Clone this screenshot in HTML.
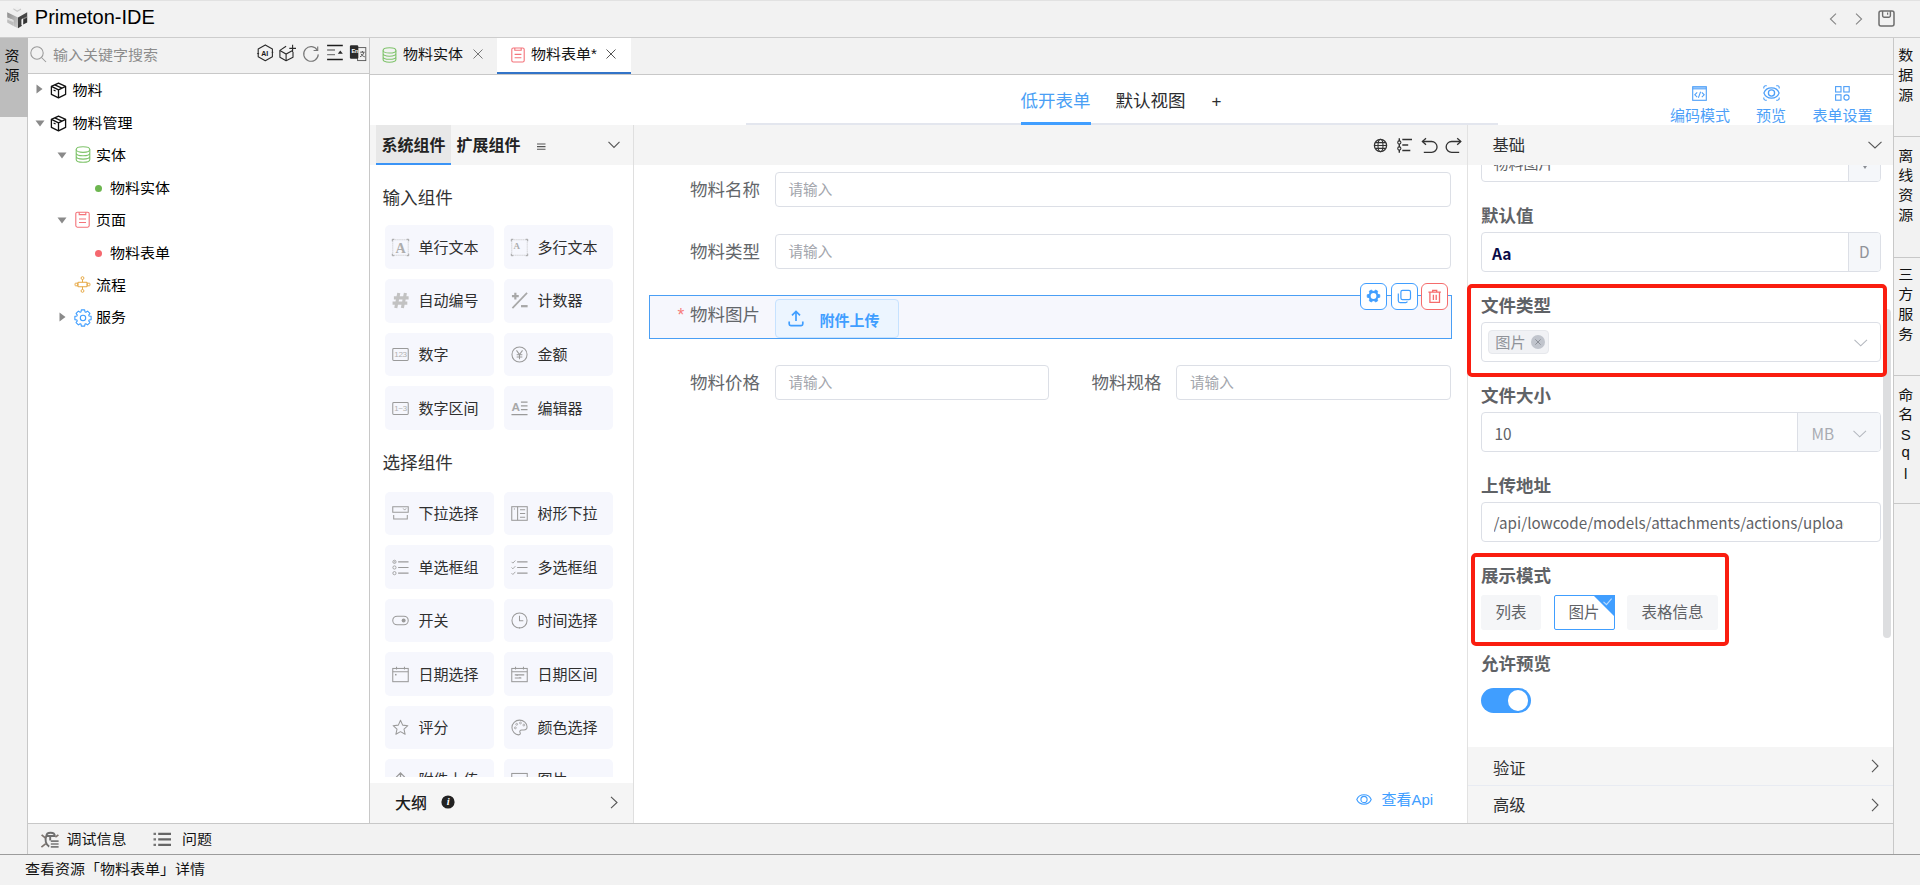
<!DOCTYPE html>
<html lang="zh-CN">
<head>
<meta charset="utf-8">
<title>Primeton-IDE</title>
<style>
*{box-sizing:border-box;margin:0;padding:0}
html,body{width:1920px;height:885px;overflow:hidden;background:#f2f2f2;color:#000;
  font-family:"Liberation Sans","Noto Sans CJK SC",sans-serif;font-size:15px;}
body{position:relative}
.a{position:absolute}
.t{position:absolute;white-space:nowrap;line-height:1}
svg{position:absolute;overflow:visible}
.card{position:absolute;width:109px;height:43.5px;background:#f6f7fd;border-radius:5px}
.inp{position:absolute;background:#fff;border:1px solid #dcdfe6;border-radius:4px}
</style>
</head>
<body>
<div class="a" style="left:0px;top:0px;width:1920px;height:38px;background:#f2f2f2;border-top:1px solid #e2e2e2;border-bottom:1px solid #cdcdcd"></div>
<svg style="left:0px;top:0px;" width="34" height="34" viewBox="0 0 34 34" fill="none">
<defs><linearGradient id="lgL" x1="0" y1="0" x2="1" y2="1"><stop offset="0" stop-color="#8c8c8c"/><stop offset="1" stop-color="#cfcfcf"/></linearGradient>
<linearGradient id="lgR" x1="0" y1="0" x2="0" y2="1"><stop offset="0" stop-color="#4a4a4a"/><stop offset="1" stop-color="#3a3a3a"/></linearGradient></defs>
<path d="M17.2 6.4 L27.2 12.2 L18 17.6 L7.2 12.2 Z" fill="#efefef"/>
<path d="M13.4 8.2 L17.2 10.6 L21 8.4 L21 9.8 L17.2 12 L13.4 9.6 Z" fill="#c9c9c9"/>
<path d="M7.2 12.2 L18 17.6 L18 28.2 L13.4 26 L13.4 20 L7.2 17.4 Z" fill="url(#lgL)"/>
<path d="M18 17.6 L27.2 12.2 L27.2 16.4 L22 19 L22 25.8 L18 28.2 Z" fill="url(#lgR)"/>
<path d="M7.2 18 L13.4 20.6 L13.4 22 L7.2 19.6 Z" fill="#dcdcdc"/>
<path d="M7.2 19.6 L13.4 22 L13.4 26 L7.2 22.6 Z" fill="#bdbdbd"/>
<path d="M21.4 19.4 L23.2 18.4 L23.2 24.6 L21.4 25.6 Z" fill="#f4f4f4"/>
<path d="M23.2 18.4 L27.2 16.4 L27.2 22.6 L23.2 24.6 Z" fill="#333"/>
<path d="M22.6 18.8 L27.2 16.4 L27.2 17.6 L23.6 19.5 Z" fill="#8a8a8a"/>
</svg>
<div class="t" style="left:34.8px;top:7px;font-size:20px;color:#000;">Primeton-IDE</div>
<svg style="left:1828px;top:11.5px;" width="10" height="14" viewBox="0 0 10 14" fill="none"><path d="M8 1.6 L2.4 7 L8 12.4" stroke="#858585" stroke-width="1.05"/></svg>
<svg style="left:1854px;top:11.5px;" width="10" height="14" viewBox="0 0 10 14" fill="none"><path d="M2 1.6 L7.6 7 L2 12.4" stroke="#858585" stroke-width="1.05"/></svg>
<svg style="left:1878px;top:10px;" width="17" height="17" viewBox="0 0 17 17" fill="none"><rect x="1" y="1" width="15" height="15" rx="2" stroke="#6e6e6e" stroke-width="1.5"/><path d="M4.6 1 V5.6 A1.6 1.6 0 0 0 6.2 7.2 H10.8 A1.6 1.6 0 0 0 12.4 5.6 V1" stroke="#6e6e6e" stroke-width="1.4"/><path d="M9.6 2.6 V4.8" stroke="#6e6e6e" stroke-width="1.2"/></svg>
<div class="a" style="left:0px;top:38px;width:28px;height:818px;background:#f2f2f2;border-right:1px solid #c8c8c8"></div>
<div class="a" style="left:0px;top:38px;width:28px;height:79px;background:#bdbdbd"></div>
<div class="t" style="left:4.5px;top:46px;font-size:15px;line-height:20px;white-space:normal;width:16px;color:#0a0a0a;transform:scaleY(.92)">资源</div>
<div class="a" style="left:28px;top:38px;width:341px;height:36px;background:#f2f2f2;border-bottom:1px solid #c8c8c8"></div>
<svg style="left:29.8px;top:46.2px;" width="17" height="17" viewBox="0 0 17 17" fill="none"><circle cx="7" cy="7" r="6.2" stroke="#999" stroke-width="1.05"/><path d="M11.5 11.5 L16 16" stroke="#999" stroke-width="1.05"/></svg>
<div class="t" style="left:53px;top:48px;font-size:15px;color:#8c8c8c;transform:scaleY(.9);transform-origin:50% 50%;">输入关键字搜索</div>
<svg style="left:250px;top:38px;" width="125" height="36" viewBox="250 38 125 36" fill="none">
<path d="M265.3 44.9 L272.4 48.9 V56.8 L265.3 60.8 L258.2 56.8 V48.9 Z" stroke="#2a2a2a" stroke-width="1.1" stroke-linejoin="round"/>
<path d="M256.8 53 L258.2 54.6 L259.4 53 Z M271.4 52.6 L272.5 51 L273.6 52.6 Z" fill="#2a2a2a"/>
<path d="M286.1 46.2 L279.9 50.4 V57.2 L286.1 60.8 L293 57.2 V52" stroke="#2a2a2a" stroke-width="1.1" stroke-linejoin="round"/>
<path d="M279.9 50.4 L286.1 54 L292.6 50.6 M286.1 54 V60.8" stroke="#2a2a2a" stroke-width="1.1"/>
<path d="M292.6 44.8 V52 M289.3 48.4 H296" stroke="#2a2a2a" stroke-width="1.1"/>
<path d="M318.3 54.4 A7.3 7.3 0 1 1 317.4 50.4" stroke="#777" stroke-width="1.15"/>
<path d="M317.7 46.4 V50.5 H313.6" stroke="#777" stroke-width="1.15"/>
<path d="M327.1 45.5 H342.8 M327.1 59.5 H342.8" stroke="#1e1e1e" stroke-width="1.5"/>
<path d="M327.1 50 H335 M327.1 54.6 H335" stroke="#7d7d7d" stroke-width="1.4"/>
<path d="M337.8 53.8 L340.3 50.6 L342.8 53.8 Z" fill="#2a2a2a"/>
<rect x="357.6" y="47.6" width="8.2" height="13" stroke="#555" stroke-width="0.9" fill="#f2f2f2"/>
<path d="M360.2 52.2 H364.6 M362.4 51 V52.2 M363.8 52.4 C363.4 54.6 361.6 56.2 360 56.8 M361 53.8 C361.8 55.4 363.2 56.4 364.8 56.8" stroke="#333" stroke-width="0.8"/>
<rect x="349.9" y="45.2" width="8.4" height="13.6" rx="1.2" fill="#2b2b2b"/>
</svg>
<div class="t" style="left:261.3px;top:50px;font-size:7px;color:#1a1a1a;font-weight:bold;">AI</div>
<div class="t" style="left:351.4px;top:49px;font-size:5.6px;color:#fff;font-weight:bold;">En</div>
<div class="a" style="left:28px;top:74px;width:341px;height:749px;background:#fff"></div>
<div class="a" style="left:369px;top:38px;width:1px;height:785px;background:#c8c8c8"></div>
<svg style="left:35.8px;top:84.4px;" width="7" height="10" viewBox="0 0 7 10" fill="none"><path d="M0.5 0.5 L6.5 5 L0.5 9.5 Z" fill="#8a8a8a"/></svg><svg style="left:50.1px;top:81.7px;" width="17" height="17" viewBox="0 0 17 17" fill="none"><path d="M8.5 1.2 L15.6 4.4 V12.4 L8.5 15.8 L1.4 12.4 V4.4 Z" stroke="#111" stroke-width="1.3" stroke-linejoin="round"/><path d="M1.4 4.4 L8.5 7.8 L15.6 4.4 M8.5 7.8 V15.8 M4.8 2.9 L12 6.2" stroke="#111" stroke-width="1.3" stroke-linejoin="round"/><path d="M3.6 8 L5.6 9" stroke="#111" stroke-width="1.2"/></svg><div class="t" style="left:72.5px;top:83px;font-size:15px;color:#000;transform:scaleY(.9);transform-origin:50% 50%;">物料</div>
<svg style="left:35px;top:120px;" width="10" height="7" viewBox="0 0 10 7" fill="none"><path d="M0.5 0.5 L9.5 0.5 L5 6.5 Z" fill="#8a8a8a"/></svg><svg style="left:50.1px;top:114.5px;" width="17" height="17" viewBox="0 0 17 17" fill="none"><path d="M8.5 1.2 L15.6 4.4 V12.4 L8.5 15.8 L1.4 12.4 V4.4 Z" stroke="#111" stroke-width="1.3" stroke-linejoin="round"/><path d="M1.4 4.4 L8.5 7.8 L15.6 4.4 M8.5 7.8 V15.8 M4.8 2.9 L12 6.2" stroke="#111" stroke-width="1.3" stroke-linejoin="round"/><path d="M3.6 8 L5.6 9" stroke="#111" stroke-width="1.2"/></svg><div class="t" style="left:72.5px;top:116px;font-size:15px;color:#000;transform:scaleY(.9);transform-origin:50% 50%;">物料管理</div>
<svg style="left:57px;top:152.3px;" width="10" height="7" viewBox="0 0 10 7" fill="none"><path d="M0.5 0.5 L9.5 0.5 L5 6.5 Z" fill="#8a8a8a"/></svg><svg style="left:74.7px;top:146.0px;" width="16" height="17" viewBox="0 0 16 17" fill="none"><ellipse cx="8" cy="3.6" rx="6.8" ry="2.8" stroke="#7fc36b" stroke-width="1.1"/><path d="M1.2 3.6 V13.4 C1.2 15 4.2 16.2 8 16.2 C11.8 16.2 14.8 15 14.8 13.4 V3.6 M1.2 7 C1.2 8.6 4.2 9.8 8 9.8 C11.8 9.8 14.8 8.6 14.8 7 M1.2 10.3 C1.2 11.9 4.2 13.1 8 13.1 C11.8 13.1 14.8 11.9 14.8 10.3" stroke="#7fc36b" stroke-width="1.1"/></svg><div class="t" style="left:96px;top:148px;font-size:15px;color:#000;transform:scaleY(.9);transform-origin:50% 50%;">实体</div>
<div class="a" style="left:94.8px;top:184.5px;width:7.6px;height:7.6px;background:#6db650;border-radius:50%"></div><div class="t" style="left:110px;top:181px;font-size:15px;color:#000;transform:scaleY(.9);transform-origin:50% 50%;">物料实体</div>
<svg style="left:57px;top:217.3px;" width="10" height="7" viewBox="0 0 10 7" fill="none"><path d="M0.5 0.5 L9.5 0.5 L5 6.5 Z" fill="#8a8a8a"/></svg><svg style="left:74.6px;top:210.8px;" width="15" height="17" viewBox="0 0 15 17" fill="none"><rect x="0.8" y="1.2" width="13.4" height="15" rx="1.6" stroke="#f4737a" stroke-width="1.1"/><path d="M4.2 1.2 V3.6 H10.8 V1.2 M4 8 H11 M4 11.5 H11" stroke="#f4737a" stroke-width="1.1"/></svg><div class="t" style="left:96px;top:213px;font-size:15px;color:#000;transform:scaleY(.9);transform-origin:50% 50%;">页面</div>
<div class="a" style="left:94.8px;top:249.5px;width:7.6px;height:7.6px;background:#f5686f;border-radius:50%"></div><div class="t" style="left:110px;top:246px;font-size:15px;color:#000;transform:scaleY(.9);transform-origin:50% 50%;">物料表单</div>
<svg style="left:74.2px;top:276.4px;" width="17" height="17" viewBox="0 0 17 18" fill="none"><circle cx="8.5" cy="2.2" r="1.5" stroke="#e6a640" stroke-width="1"/><circle cx="8.5" cy="15.8" r="1.5" stroke="#e6a640" stroke-width="1"/><rect x="3.6" y="6.6" width="9.8" height="4.8" rx="0.8" stroke="#e6a640" stroke-width="1.1"/><rect x="0.6" y="7.6" width="3" height="2.8" rx="0.7" stroke="#e6a640" stroke-width="1"/><rect x="13.4" y="7.6" width="3" height="2.8" rx="0.7" stroke="#e6a640" stroke-width="1"/><path d="M8.5 3.7 V6.6 M8.5 11.4 V14.3" stroke="#e6a640" stroke-width="1"/></svg><div class="t" style="left:96px;top:278px;font-size:15px;color:#000;transform:scaleY(.9);transform-origin:50% 50%;">流程</div>
<svg style="left:58.9px;top:312.2px;" width="7" height="10" viewBox="0 0 7 10" fill="none"><path d="M0.5 0.5 L6.5 5 L0.5 9.5 Z" fill="#8a8a8a"/></svg><svg style="left:74px;top:309px;" width="18" height="18" viewBox="0 0 18 18" fill="none"><path d="M17.13 7.35 L17.13 10.65 L15.08 11.01 L14.72 11.87 L15.92 13.59 L13.59 15.92 L11.87 14.72 L11.01 15.08 L10.65 17.13 L7.35 17.13 L6.99 15.08 L6.13 14.72 L4.41 15.92 L2.08 13.59 L3.28 11.87 L2.92 11.01 L0.87 10.65 L0.87 7.35 L2.92 6.99 L3.28 6.13 L2.08 4.41 L4.41 2.08 L6.13 3.28 L6.99 2.92 L7.35 0.87 L10.65 0.87 L11.01 2.92 L11.87 3.28 L13.59 2.08 L15.92 4.41 L14.72 6.13 L15.08 6.99 Z" stroke="#409eff" stroke-width="1.1" stroke-linejoin="round"/><circle cx="9" cy="9" r="2.7" stroke="#409eff" stroke-width="1.1"/></svg><div class="t" style="left:96px;top:310px;font-size:15px;color:#000;transform:scaleY(.9);transform-origin:50% 50%;">服务</div>
<div class="a" style="left:1893px;top:38px;width:27px;height:818px;background:#f2f2f2;border-left:1px solid #c8c8c8"></div>
<div class="t" style="left:1805.7px;width:200px;text-align:center;top:48px;font-size:15px;color:#111;transform:scaleY(.9);transform-origin:50% 50%;">数</div><div class="t" style="left:1805.7px;width:200px;text-align:center;top:68px;font-size:15px;color:#111;transform:scaleY(.9);transform-origin:50% 50%;">据</div><div class="t" style="left:1805.7px;width:200px;text-align:center;top:88px;font-size:15px;color:#111;transform:scaleY(.9);transform-origin:50% 50%;">源</div>
<div class="a" style="left:1894px;top:136px;width:26px;height:1px;background:#c8c8c8"></div>
<div class="t" style="left:1805.7px;width:200px;text-align:center;top:149px;font-size:15px;color:#111;transform:scaleY(.9);transform-origin:50% 50%;">离</div><div class="t" style="left:1805.7px;width:200px;text-align:center;top:168px;font-size:15px;color:#111;transform:scaleY(.9);transform-origin:50% 50%;">线</div><div class="t" style="left:1805.7px;width:200px;text-align:center;top:188px;font-size:15px;color:#111;transform:scaleY(.9);transform-origin:50% 50%;">资</div><div class="t" style="left:1805.7px;width:200px;text-align:center;top:208px;font-size:15px;color:#111;transform:scaleY(.9);transform-origin:50% 50%;">源</div>
<div class="a" style="left:1894px;top:257px;width:26px;height:1px;background:#c8c8c8"></div>
<div class="t" style="left:1805.7px;width:200px;text-align:center;top:267px;font-size:15px;color:#111;transform:scaleY(.9);transform-origin:50% 50%;">三</div><div class="t" style="left:1805.7px;width:200px;text-align:center;top:287px;font-size:15px;color:#111;transform:scaleY(.9);transform-origin:50% 50%;">方</div><div class="t" style="left:1805.7px;width:200px;text-align:center;top:307px;font-size:15px;color:#111;transform:scaleY(.9);transform-origin:50% 50%;">服</div><div class="t" style="left:1805.7px;width:200px;text-align:center;top:327px;font-size:15px;color:#111;transform:scaleY(.9);transform-origin:50% 50%;">务</div>
<div class="a" style="left:1894px;top:375px;width:26px;height:1px;background:#c8c8c8"></div>
<div class="t" style="left:1805.7px;width:200px;text-align:center;top:388px;font-size:15px;color:#111;transform:scaleY(.9);transform-origin:50% 50%;">命</div><div class="t" style="left:1805.7px;width:200px;text-align:center;top:407px;font-size:15px;color:#111;transform:scaleY(.9);transform-origin:50% 50%;">名</div><div class="t" style="left:1805.7px;width:200px;text-align:center;top:427px;font-size:15px;color:#111;">S</div><div class="t" style="left:1805.7px;width:200px;text-align:center;top:444px;font-size:15px;color:#111;">q</div><div class="t" style="left:1805.7px;width:200px;text-align:center;top:466px;font-size:15px;color:#111;">l</div>
<div class="a" style="left:1894px;top:503px;width:26px;height:1px;background:#c8c8c8"></div>
<div class="a" style="left:28px;top:823px;width:1865px;height:33px;background:#f2f2f2;border-top:1px solid #c8c8c8"></div>
<svg style="left:41px;top:831px;" width="18" height="17" viewBox="0 0 18 17" fill="none"><path d="M5.4 5 C5.4 0.6 13.8 0.6 13.8 5 M4.8 5 H14.4 M9.2 5 V9.4 M5.2 5.2 C3.8 9 4.6 13.6 8.2 15.6" stroke="#6e6e6e" stroke-width="1.9"/><path d="M0.6 3.8 L4.6 7.2 M0.4 16.2 L4.8 12.6 M17.4 3.8 L14.4 6.2" stroke="#7d746e" stroke-width="1.7"/><path d="M9.8 10.2 H17.6 M9.8 13 H17.6 M9.8 15.8 H17.6" stroke="#7a7a7a" stroke-width="1.7"/></svg>
<div class="t" style="left:66.5px;top:832px;font-size:15px;color:#111;transform:scaleY(.9);transform-origin:50% 50%;">调试信息</div>
<svg style="left:153px;top:832px;" width="18" height="15" viewBox="0 0 18 15" fill="none"><path d="M0.5 1.8 H3 M0.5 7.3 H3 M0.5 12.8 H3" stroke="#777" stroke-width="2.2"/><path d="M5.2 1.8 H18 M5.2 7.3 H18 M5.2 12.8 H18" stroke="#666" stroke-width="2.2"/></svg>
<div class="t" style="left:182px;top:832px;font-size:15px;color:#111;transform:scaleY(.9);transform-origin:50% 50%;">问题</div>
<div class="a" style="left:0px;top:854px;width:1920px;height:31px;background:#f2f2f2;border-top:1.5px solid #9c9c9c"></div>
<div class="t" style="left:25px;top:862px;font-size:15px;color:#111;transform:scaleY(.9);transform-origin:50% 50%;">查看资源「物料表单」详情</div>
<div class="a" style="left:370px;top:38px;width:1523px;height:37px;background:#f2f2f2;border-bottom:1px solid #c8c8c8"></div>
<div class="a" style="left:497px;top:38px;width:134px;height:36px;background:#fff;border-bottom:2px solid #3274c8"></div>
<svg style="left:382px;top:46.5px;" width="15" height="16" viewBox="0 0 15 16" fill="none"><ellipse cx="7.5" cy="3.4" rx="6.4" ry="2.6" stroke="#7fc36b" stroke-width="1.1"/><path d="M1.1 3.4 V12.6 C1.1 14.1 4 15.2 7.5 15.2 C11 15.2 13.9 14.1 13.9 12.6 V3.4 M1.1 6.6 C1.1 8.1 4 9.2 7.5 9.2 C11 9.2 13.9 8.1 13.9 6.6 M1.1 9.7 C1.1 11.2 4 12.3 7.5 12.3 C11 12.3 13.9 11.2 13.9 9.7" stroke="#7fc36b" stroke-width="1.1"/></svg>
<div class="t" style="left:403px;top:46px;font-size:15px;color:#111;transform:scaleY(.92);">物料实体</div>
<svg style="left:472.5px;top:49.4px;" width="10" height="10" viewBox="0 0 10 10" fill="none"><path d="M0.5 0.5 L9.5 9.5 M9.5 0.5 L0.5 9.5" stroke="#777" stroke-width="1"/></svg>
<svg style="left:511px;top:46.5px;" width="14" height="16" viewBox="0 0 14 16" fill="none"><rect x="0.8" y="1" width="12.4" height="14" rx="1.5" stroke="#f4737a" stroke-width="1.1"/><path d="M3.8 1 V3.2 H10.2 V1 M3.6 7.4 H10.4 M3.6 10.8 H10.4" stroke="#f4737a" stroke-width="1.1"/></svg>
<div class="t" style="left:531px;top:46px;font-size:15px;color:#111;transform:scaleY(.92);">物料表单*</div>
<svg style="left:606px;top:49.4px;" width="10" height="10" viewBox="0 0 10 10" fill="none"><path d="M0.5 0.5 L9.5 9.5 M9.5 0.5 L0.5 9.5" stroke="#555" stroke-width="1"/></svg>
<div class="a" style="left:370px;top:75px;width:1523px;height:748px;background:#fff"></div>
<div class="t" style="left:1020.5px;top:93px;font-size:17.5px;color:#4a9ff5;">低开表单</div>
<div class="t" style="left:1115.5px;top:93px;font-size:17.5px;color:#2b2d30;">默认视图</div>
<div class="t" style="left:1116.5px;width:200px;text-align:center;top:93px;font-size:17px;color:#2b2d30;">+</div>
<div class="a" style="left:746px;top:123px;width:752px;height:2px;background:#e3e6ee"></div>
<div class="a" style="left:1020.5px;top:122.4px;width:70px;height:2.6px;background:#409eff"></div>
<svg style="left:1692px;top:86px;" width="15" height="15" viewBox="0 0 15 15" fill="none"><rect x="0.7" y="0.7" width="13.6" height="13.6" stroke="#4d9ff8" stroke-width="1.1"/><path d="M0.7 2.4 H14.3" stroke="#4d9ff8" stroke-width="2.2" stroke-opacity="0.75"/><path d="M5.2 6.4 L2.8 8.8 L5.2 11.2 M9.8 6.4 L12.2 8.8 L9.8 11.2 M8.6 5.8 L6.4 11.8" stroke="#4d9ff8" stroke-width="1.05"/></svg>
<div class="t" style="left:1670px;top:108px;font-size:15px;color:#4d9ff8;">编码模式</div>
<svg style="left:1762.5px;top:85px;" width="17" height="16" viewBox="0 0 17 16" fill="none"><path d="M0.8 3.6 V2.4 A1.6 1.6 0 0 1 2.4 0.8 H3.8 M13.2 0.8 H14.6 A1.6 1.6 0 0 1 16.2 2.4 V3.6 M16.2 12.4 V13.6 A1.6 1.6 0 0 1 14.6 15.2 H13.2 M3.8 15.2 H2.4 A1.6 1.6 0 0 1 0.8 13.6 V12.4" stroke="#4d9ff8" stroke-width="1.1"/><path d="M0.9 8 C3.4 1.2 13.6 1.2 16.1 8 C13.6 14.8 3.4 14.8 0.9 8 Z" stroke="#4d9ff8" stroke-width="1.2"/><circle cx="8.5" cy="8" r="3.1" stroke="#4d9ff8" stroke-width="1.3"/></svg>
<div class="t" style="left:1756px;top:108px;font-size:15px;color:#4d9ff8;">预览</div>
<svg style="left:1835px;top:86px;" width="15" height="15" viewBox="0 0 15 15" fill="none"><rect x="0.6" y="0.6" width="5.4" height="5.4" stroke="#4d9ff8" stroke-width="1.1"/><rect x="8.8" y="0.6" width="5.4" height="5.4" stroke="#4d9ff8" stroke-width="1.1"/><rect x="0.6" y="8.8" width="5.4" height="5.4" stroke="#4d9ff8" stroke-width="1.1"/><circle cx="11.5" cy="11.5" r="2.6" stroke="#4d9ff8" stroke-width="1.1"/></svg>
<div class="t" style="left:1812.5px;top:108px;font-size:15px;color:#4d9ff8;">表单设置</div>
<div class="a" style="left:370px;top:125px;width:263px;height:40px;background:#f5f5f5"></div>
<div class="a" style="left:376px;top:125px;width:75px;height:40px;background:#e8e8e8;border-bottom:2.5px solid #3a94f6"></div>
<div class="t" style="left:381.5px;top:138px;font-size:16px;color:#222;font-weight:bold;">系统组件</div>
<div class="t" style="left:456.5px;top:138px;font-size:16px;color:#222;font-weight:bold;">扩展组件</div>
<svg style="left:537px;top:143px;" width="9" height="7" viewBox="0 0 9 7" fill="none"><path d="M0 1 H8.5 M0 3.6 H8.5 M0 6.2 H8.5" stroke="#555" stroke-width="1.1"/></svg>
<svg style="left:608px;top:141px;" width="12" height="8" viewBox="0 0 12 8" fill="none"><path d="M0.5 0.8 L6 6.5 L11.5 0.8" stroke="#555" stroke-width="1.1"/></svg>
<div class="a" style="left:633px;top:125px;width:1px;height:698px;background:#dfdfdf"></div>
<div class="a" style="left:370px;top:165px;width:263px;height:611.8px;overflow:hidden">
<div class="t" style="left:12.5px;top:25px;font-size:17.6px;color:#333;">输入组件</div>
<div class="card" style="left:15px;top:60px;height:44px"></div><svg style="left:22px;top:73.5px;" width="17" height="17" viewBox="0 0 18 18" fill="none"><rect x="0.8" y="0.8" width="16.4" height="16.4" stroke="#b0b0b0" stroke-width="0.8" stroke-dasharray="1 1.05"/><path d="M0.3 2.4 V0.3 H2.4 M15.6 0.3 H17.7 V2.4 M17.7 15.6 V17.7 H15.6 M2.4 17.7 H0.3 V15.6" stroke="#a0a0a0" stroke-width="1"/><text x="9" y="14.4" font-size="15" font-weight="bold" font-family="Liberation Serif,serif" fill="#adadad" text-anchor="middle">A</text></svg><div class="t" style="left:48.5px;top:75px;font-size:15px;color:#2f2f2f;">单行文本</div>
<div class="card" style="left:134px;top:60px;height:44px"></div><svg style="left:141px;top:73.5px;" width="17" height="17" viewBox="0 0 18 18" fill="none"><rect x="0.8" y="0.8" width="16.4" height="16.4" stroke="#b0b0b0" stroke-width="0.8" stroke-dasharray="1 1.05"/><path d="M0.3 2.4 V0.3 H2.4 M15.6 0.3 H17.7 V2.4 M17.7 15.6 V17.7 H15.6 M2.4 17.7 H0.3 V15.6" stroke="#a0a0a0" stroke-width="1"/><text x="6.2" y="10.4" font-size="9.5" font-weight="bold" font-family="Liberation Serif,serif" fill="#adadad" text-anchor="middle">A</text></svg><div class="t" style="left:167.5px;top:75px;font-size:15px;color:#2f2f2f;">多行文本</div>
<div class="card" style="left:15px;top:114px;height:43.7px"></div><svg style="left:22px;top:126.5px;" width="17" height="17" viewBox="0 0 18 18" fill="none"><path d="M7.2 1 L4 17 M14.2 1 L11 17 M2 6.2 H17.6 M0.6 11.8 H16.2" stroke="#c2c2c2" stroke-width="3.3"/></svg><div class="t" style="left:48.5px;top:128px;font-size:15px;color:#2f2f2f;">自动编号</div>
<div class="card" style="left:134px;top:114px;height:43.7px"></div><svg style="left:141px;top:126.5px;" width="17" height="17" viewBox="0 0 18 18" fill="none"><path d="M17 1 L1.5 17" stroke="#a8a8a8" stroke-width="1.8"/><path d="M4.6 0.8 V8 M1 4.4 H8.2" stroke="#a8a8a8" stroke-width="2.3"/><path d="M10.6 15 H17.6" stroke="#a8a8a8" stroke-width="2.4"/></svg><div class="t" style="left:167.5px;top:128px;font-size:15px;color:#2f2f2f;">计数器</div>
<div class="card" style="left:15px;top:168px;height:42.5px"></div><svg style="left:22px;top:180.5px;" width="17" height="17" viewBox="0 0 18 18" fill="none"><rect x="0.8" y="2.6" width="16.4" height="12.8" rx="1" stroke="#9a9a9a" stroke-width="1.1"/><text x="9" y="12" font-size="8.6" font-family="Liberation Sans,sans-serif" fill="#b0b0b0" text-anchor="middle" letter-spacing="-0.3">123</text></svg><div class="t" style="left:48.5px;top:182px;font-size:15px;color:#2f2f2f;">数字</div>
<div class="card" style="left:134px;top:168px;height:42.5px"></div><svg style="left:141px;top:180.5px;" width="17" height="17" viewBox="0 0 18 18" fill="none"><circle cx="9" cy="9" r="8" stroke="#9a9a9a" stroke-width="1.1"/><path d="M5.8 4.6 L9 9 L12.2 4.6 M9 9 V14 M6 9.2 H12 M6 11.6 H12" stroke="#9a9a9a" stroke-width="1.1"/></svg><div class="t" style="left:167.5px;top:182px;font-size:15px;color:#2f2f2f;">金额</div>
<div class="card" style="left:15px;top:221px;height:44px"></div><svg style="left:22px;top:234.5px;" width="17" height="17" viewBox="0 0 18 18" fill="none"><rect x="0.8" y="2.6" width="16.4" height="12.8" rx="1" stroke="#9a9a9a" stroke-width="1.1"/><text x="9" y="12" font-size="8.4" font-family="Liberation Sans,sans-serif" fill="#b0b0b0" text-anchor="middle" letter-spacing="-0.3">1~3</text></svg><div class="t" style="left:48.5px;top:236px;font-size:15px;color:#2f2f2f;">数字区间</div>
<div class="card" style="left:134px;top:221px;height:44px"></div><svg style="left:141px;top:234.5px;" width="17" height="17" viewBox="0 0 18 18" fill="none"><text x="5" y="11.4" font-size="12.5" font-weight="bold" font-family="Liberation Sans,sans-serif" fill="#a8a8a8" text-anchor="middle">A</text><path d="M10.5 2.2 H17.5 M10.5 6.2 H17.5 M10.5 10.2 H17.5 M0.5 15.5 H17.5" stroke="#9a9a9a" stroke-width="1.3"/></svg><div class="t" style="left:167.5px;top:236px;font-size:15px;color:#2f2f2f;">编辑器</div>
<div class="t" style="left:12.5px;top:290px;font-size:17.6px;color:#333;">选择组件</div>
<div class="card" style="left:15px;top:327px;height:42.5px"></div><svg style="left:22px;top:339.5px;" width="17" height="17" viewBox="0 0 18 18" fill="none"><path d="M0.8 7.6 V1.8 H17.2 V7.6 Z" stroke="#9a9a9a" stroke-width="1.1"/><path d="M11.8 3.6 L13.4 5.4 L15 3.6" stroke="#9a9a9a" stroke-width="0.9"/><path d="M1.8 10.5 V14.8 H16.2 V10.5" stroke="#9a9a9a" stroke-width="1.1"/></svg><div class="t" style="left:48.5px;top:341px;font-size:15px;color:#2f2f2f;">下拉选择</div>
<div class="card" style="left:134px;top:327px;height:42.5px"></div><svg style="left:141px;top:339.5px;" width="17" height="17" viewBox="0 0 18 18" fill="none"><rect x="0.8" y="1.8" width="16.4" height="14.4" stroke="#9a9a9a" stroke-width="1.1"/><path d="M7 1.8 V16.2 M9.5 5 H15 M9.5 9 H15 M9.5 13 H15 M3 4.2 H4.2" stroke="#9a9a9a" stroke-width="1.1"/></svg><div class="t" style="left:167.5px;top:341px;font-size:15px;color:#2f2f2f;">树形下拉</div>
<div class="card" style="left:15px;top:380px;height:44px"></div><svg style="left:22px;top:393.5px;" width="17" height="17" viewBox="0 0 18 18" fill="none"><circle cx="2.6" cy="3" r="1.7" stroke="#9a9a9a" stroke-width="0.9"/><circle cx="2.6" cy="9" r="1.7" stroke="#9a9a9a" stroke-width="0.9"/><circle cx="2.6" cy="15" r="1.7" stroke="#9a9a9a" stroke-width="0.9"/><circle cx="2.6" cy="3" r="0.6" fill="#9a9a9a"/><path d="M6.5 3 H17.5 M6.5 9 H17.5 M6.5 15 H17.5" stroke="#9a9a9a" stroke-width="1.3"/></svg><div class="t" style="left:48.5px;top:395px;font-size:15px;color:#2f2f2f;">单选框组</div>
<div class="card" style="left:134px;top:380px;height:44px"></div><svg style="left:141px;top:393.5px;" width="17" height="17" viewBox="0 0 18 18" fill="none"><path d="M0.6 3 L2 4.4 L4.6 1.6 M0.6 9 L2 10.4 L4.6 7.6 M0.6 15 L2 16.4 L4.6 13.6" stroke="#9a9a9a" stroke-width="0.9"/><path d="M6.5 3 H17.5 M6.5 9 H17.5 M6.5 15 H17.5" stroke="#9a9a9a" stroke-width="1.3"/></svg><div class="t" style="left:167.5px;top:395px;font-size:15px;color:#2f2f2f;">多选框组</div>
<div class="card" style="left:15px;top:434px;height:42.6px"></div><svg style="left:22px;top:446.5px;" width="17" height="17" viewBox="0 0 18 18" fill="none"><rect x="0.8" y="4.4" width="16.4" height="9.2" rx="4.6" stroke="#9a9a9a" stroke-width="1.1"/><circle cx="12.3" cy="9" r="2.1" fill="#9a9a9a"/></svg><div class="t" style="left:48.5px;top:448px;font-size:15px;color:#2f2f2f;">开关</div>
<div class="card" style="left:134px;top:434px;height:42.6px"></div><svg style="left:141px;top:446.5px;" width="17" height="17" viewBox="0 0 18 18" fill="none"><circle cx="9" cy="9" r="8" stroke="#9a9a9a" stroke-width="1.1"/><path d="M9 4 V9.3 H13" stroke="#9a9a9a" stroke-width="1.1"/><path d="M9 16 V17.4" stroke="#9a9a9a" stroke-width="1"/></svg><div class="t" style="left:167.5px;top:448px;font-size:15px;color:#2f2f2f;">时间选择</div>
<div class="card" style="left:15px;top:487px;height:43.5px"></div><svg style="left:22px;top:500.5px;" width="17" height="17" viewBox="0 0 18 18" fill="none"><rect x="0.8" y="2.6" width="16.4" height="14" stroke="#9a9a9a" stroke-width="1.1"/><path d="M0.8 6 H17.2 M4.8 0.8 V3.6 M13.2 0.8 V3.6" stroke="#9a9a9a" stroke-width="1.1"/><rect x="3.2" y="8.4" width="1.6" height="1.6" fill="#9a9a9a"/></svg><div class="t" style="left:48.5px;top:502px;font-size:15px;color:#2f2f2f;">日期选择</div>
<div class="card" style="left:134px;top:487px;height:43.5px"></div><svg style="left:141px;top:500.5px;" width="17" height="17" viewBox="0 0 18 18" fill="none"><rect x="0.8" y="2.6" width="16.4" height="14" stroke="#9a9a9a" stroke-width="1.1"/><path d="M0.8 6 H17.2 M4.8 0.8 V3.6 M13.2 0.8 V3.6" stroke="#9a9a9a" stroke-width="1.1"/><path d="M4 9.4 H14 M4 12.8 H11" stroke="#9a9a9a" stroke-width="1.1"/><path d="M9.5 12.8 V11.6 M6.5 9.4 V10.6" stroke="#9a9a9a" stroke-width="1"/></svg><div class="t" style="left:167.5px;top:502px;font-size:15px;color:#2f2f2f;">日期区间</div>
<div class="card" style="left:15px;top:541px;height:43px"></div><svg style="left:22px;top:553.5px;" width="17" height="17" viewBox="0 0 18 18" fill="none"><path d="M9 1.4 L11.3 6.5 L16.8 7.1 L12.7 10.8 L13.9 16.2 L9 13.4 L4.1 16.2 L5.3 10.8 L1.2 7.1 L6.7 6.5 Z" stroke="#9a9a9a" stroke-width="1.1" stroke-linejoin="round"/></svg><div class="t" style="left:48.5px;top:555px;font-size:15px;color:#2f2f2f;">评分</div>
<div class="card" style="left:134px;top:541px;height:43px"></div><svg style="left:141px;top:553.5px;" width="17" height="17" viewBox="0 0 18 18" fill="none"><path d="M9 1.2 C4.6 1.2 1 4.7 1 9 C1 13.3 4.4 16.8 8 16.8 C10 16.8 10.2 15.4 9.6 14.4 C8.8 13 9.6 11.6 11.4 11.6 H13.6 C15.6 11.6 17 10.2 17 8.2 C17 4.2 13.4 1.2 9 1.2 Z" stroke="#9a9a9a" stroke-width="1.1"/><circle cx="4.6" cy="9.4" r="1" stroke="#9a9a9a" stroke-width="0.8"/><circle cx="6" cy="5.6" r="1" stroke="#9a9a9a" stroke-width="0.8"/><circle cx="10" cy="4.2" r="1" stroke="#9a9a9a" stroke-width="0.8"/><circle cx="13.6" cy="6.4" r="1" stroke="#9a9a9a" stroke-width="0.8"/></svg><div class="t" style="left:167.5px;top:555px;font-size:15px;color:#2f2f2f;">颜色选择</div>
<div class="card" style="left:15px;top:594px;height:43.5px"></div><svg style="left:22px;top:605.5px;" width="17" height="17" viewBox="0 0 18 18" fill="none"><path d="M9 2 V12 M4.5 6.5 L9 2 L13.5 6.5" stroke="#9a9a9a" stroke-width="1.3"/><path d="M1.5 12 V16 H16.5 V12" stroke="#9a9a9a" stroke-width="1.3"/></svg><div class="t" style="left:48.5px;top:607px;font-size:15px;color:#2f2f2f;">附件上传</div>
<div class="card" style="left:134px;top:594px;height:43.5px"></div><svg style="left:141px;top:605.5px;" width="17" height="17" viewBox="0 0 18 18" fill="none"><rect x="0.8" y="2.6" width="16.4" height="12.8" stroke="#9a9a9a" stroke-width="1.1"/><path d="M0.8 12 L5.5 8 L9 11 L12 9 L17.2 13" stroke="#9a9a9a" stroke-width="1"/></svg><div class="t" style="left:167.5px;top:607px;font-size:15px;color:#2f2f2f;">图片</div>
</div>
<div class="a" style="left:370px;top:782.5px;width:263px;height:40.5px;background:#f5f5f5"></div>
<div class="t" style="left:395px;top:796px;font-size:16px;color:#1c1c1c;font-weight:500;">大纲</div>
<svg style="left:441px;top:795px;" width="14" height="14" viewBox="0 0 14 14" fill="none"><circle cx="7" cy="7" r="6.6" fill="#222"/></svg><div class="t" style="left:348.2px;width:200px;text-align:center;top:797px;font-size:10.5px;color:#fff;font-weight:bold;font-family:'Liberation Serif',serif;font-style:italic;">i</div>
<svg style="left:610px;top:796px;" width="8" height="13" viewBox="0 0 8 13" fill="none"><path d="M1 0.8 L7 6.5 L1 12.2" stroke="#555" stroke-width="1.1"/></svg>
<div class="a" style="left:634px;top:125px;width:833px;height:39.5px;background:#f4f4f4"></div>
<svg style="left:1360px;top:128px;" width="120" height="36" viewBox="1360 128 120 36" fill="none">
<circle cx="1380.5" cy="145.5" r="6.1" stroke="#333" stroke-width="1.3"/>
<ellipse cx="1380.5" cy="145.5" rx="2.5" ry="6.1" stroke="#333" stroke-width="1.1"/>
<path d="M1374.4 145.5 H1386.6 M1375.3 142.6 H1385.7 M1375.3 148.4 H1385.7" stroke="#333" stroke-width="1.1"/>
<path d="M1399.3 138.2 V152.8" stroke="#333" stroke-width="1.4"/>
<circle cx="1399.3" cy="142.5" r="1.6" fill="#f4f4f4" stroke="#333" stroke-width="1.1"/>
<circle cx="1399.3" cy="148.5" r="1.6" fill="#f4f4f4" stroke="#333" stroke-width="1.1"/>
<path d="M1402.3 139.5 H1412 M1402.3 144.9 H1408.2 M1402.3 150.6 H1410.3" stroke="#333" stroke-width="1.5"/>
<path d="M1426 138.2 L1422.4 141.5 L1426 144.8" stroke="#333" stroke-width="1.3"/>
<path d="M1422.6 141.5 H1431.6 A5.45 5.45 0 0 1 1431.6 152.4 H1423.8" stroke="#333" stroke-width="1.3"/>
<path d="M1457.2 138.2 L1460.8 141.5 L1457.2 144.8" stroke="#333" stroke-width="1.3"/>
<path d="M1460.6 141.5 H1451.6 A5.45 5.45 0 0 0 1451.6 152.4 H1459.2" stroke="#333" stroke-width="1.3"/>
</svg>
<div class="t" style="left:690px;top:182px;font-size:17.5px;color:#63666a;">物料名称</div>
<div class="inp" style="left:775px;top:172px;width:676px;height:35px"></div>
<div class="t" style="left:788.5px;top:183px;font-size:14.6px;color:#a2a5ac;">请输入</div>
<div class="t" style="left:690px;top:244px;font-size:17.5px;color:#63666a;">物料类型</div>
<div class="inp" style="left:775px;top:234px;width:676px;height:35px"></div>
<div class="t" style="left:788.5px;top:245px;font-size:14.6px;color:#a2a5ac;">请输入</div>
<div class="a" style="left:648.5px;top:295px;width:803.5px;height:43.5px;background:#f6f7fd;border:1.2px solid #4a9ff5"></div>
<div class="t" style="left:677.5px;top:307px;font-size:17.5px;color:#f67c7c;">*</div>
<div class="t" style="left:690px;top:307px;font-size:17.5px;color:#63666a;">物料图片</div>
<div class="a" style="left:775px;top:299px;width:124px;height:38.5px;background:#ecf5ff;border:1px solid #c6e2ff;border-radius:4px"></div>
<svg style="left:787.5px;top:309.5px;" width="17" height="17" viewBox="0 0 17 17" fill="none"><path d="M8 1.4 V11 M4 5.4 L8 1.4 L12 5.4" stroke="#409eff" stroke-width="1.7"/><path d="M1.2 11.4 V14 A1.6 1.6 0 0 0 2.8 15.6 H13.2 A1.6 1.6 0 0 0 14.8 14 V11.4" stroke="#409eff" stroke-width="1.7"/></svg>
<div class="t" style="left:819.5px;top:313px;font-size:15px;color:#409eff;font-weight:bold;">附件上传</div>
<div class="a" style="left:1360px;top:283px;width:27px;height:26.5px;background:#fff;border:1.2px solid #409eff;border-radius:6px"></div><div class="a" style="left:1391px;top:283px;width:27px;height:26.5px;background:#fff;border:1.2px solid #409eff;border-radius:6px"></div><div class="a" style="left:1420.8px;top:283px;width:27px;height:26.5px;background:#fff;border:1.2px solid #f56c6c;border-radius:6px"></div>
<svg style="left:1355px;top:278px;" width="100" height="36" viewBox="1355 278 100 36" fill="none">
<path d="M1379.77 294.73 L1379.77 297.27 L1377.90 297.66 L1377.13 298.98 L1377.74 300.80 L1375.54 302.07 L1374.27 300.64 L1372.73 300.64 L1371.46 302.07 L1369.26 300.80 L1369.87 298.98 L1369.10 297.66 L1367.23 297.27 L1367.23 294.73 L1369.10 294.34 L1369.87 293.02 L1369.26 291.20 L1371.46 289.93 L1372.73 291.36 L1374.27 291.36 L1375.54 289.93 L1377.74 291.20 L1377.13 293.02 L1377.90 294.34 Z" fill="#409eff" stroke="#409eff" stroke-width="0.8" stroke-linejoin="round"/>
<circle cx="1373.5" cy="296.0" r="2.9" fill="#fff"/>
<rect x="1400.9" y="290.3" width="9.6" height="9.3" rx="1.6" stroke="#409eff" stroke-width="1.2"/>
<path d="M1398.3 293.4 V300.8 A1.8 1.8 0 0 0 1400.1 302.6 H1405.8 A1.8 1.8 0 0 0 1407.4 301.6" stroke="#409eff" stroke-width="1.2"/>
<path d="M1428.4 292.1 H1440.9 M1432.7 292.1 V290.4 H1436.7 V292.1 M1429.9 292.1 V302.4 H1439.5 V292.1 M1433.4 294.8 V299.9 M1436.2 294.8 V299.9" stroke="#f56c6c" stroke-width="1.3"/>
</svg>
<div class="t" style="left:690px;top:375px;font-size:17.5px;color:#63666a;">物料价格</div>
<div class="inp" style="left:775px;top:365px;width:274px;height:35px"></div>
<div class="t" style="left:788.5px;top:376px;font-size:14.6px;color:#a2a5ac;">请输入</div>
<div class="t" style="left:1091.5px;top:375px;font-size:17.5px;color:#63666a;">物料规格</div>
<div class="inp" style="left:1176px;top:365px;width:275px;height:35px"></div>
<div class="t" style="left:1190px;top:376px;font-size:14.6px;color:#a2a5ac;">请输入</div>
<svg style="left:1356px;top:792.5px;" width="16" height="13" viewBox="0 0 16 13" fill="none"><path d="M0.8 6.5 C3.4 0.2 12.6 0.2 15.2 6.5 C12.6 12.8 3.4 12.8 0.8 6.5 Z" stroke="#409eff" stroke-width="1.1"/><circle cx="8" cy="6.5" r="3.1" stroke="#409eff" stroke-width="1.1"/></svg>
<div class="t" style="left:1381.5px;top:792px;font-size:15px;color:#409eff;">查看Api</div>
<div class="a" style="left:1467px;top:125px;width:1px;height:698px;background:#e2e2e2"></div>
<div class="inp" style="left:1481px;top:143px;width:400px;height:39px"></div>
<div class="a" style="left:1848px;top:144px;width:32px;height:37px;background:#f5f7fa;border-left:1px solid #dcdfe6;border-radius:0 3px 3px 0"></div>
<div class="t" style="left:1493.5px;top:156px;font-size:15px;color:#5f6266;">物料图片</div>
<svg style="left:1862.5px;top:165.5px;" width="4" height="3" viewBox="0 0 4 3" fill="none"><path d="M0 0 H4 L2 3 Z" fill="#8a8d93"/></svg>
<div class="a" style="left:1468px;top:125px;width:425px;height:40px;background:#f5f5f5"></div>
<div class="t" style="left:1492.5px;top:137px;font-size:16.3px;color:#303133;">基础</div>
<svg style="left:1868px;top:141px;" width="14" height="8" viewBox="0 0 14 8" fill="none"><path d="M0.5 0.8 L7 7 L13.5 0.8" stroke="#555" stroke-width="1.1"/></svg>
<div class="t" style="left:1481px;top:208px;font-size:17.5px;color:#5f6266;font-weight:bold;">默认值</div>
<div class="inp" style="left:1481px;top:232px;width:400px;height:40px"></div>
<div class="a" style="left:1848px;top:233px;width:32px;height:38px;background:#f5f7fa;border-left:1px solid #dcdfe6;border-radius:0 3px 3px 0"></div>
<div class="t" style="left:1492px;top:246px;font-size:15.6px;color:#0a0a46;font-weight:bold;font-family:'Noto Sans CJK SC',sans-serif;">Aa</div>
<div class="t" style="left:1764.2px;width:200px;text-align:center;top:244px;font-size:15.4px;color:#909399;font-family:'Noto Sans CJK SC',sans-serif;">D</div>
<div class="a" style="left:1883px;top:309px;width:7.5px;height:328.5px;background:#dddee0;border-radius:4px"></div>
<div class="t" style="left:1481px;top:298px;font-size:17.5px;color:#5f6266;font-weight:bold;">文件类型</div>
<div class="inp" style="left:1481px;top:322px;width:400px;height:40px"></div>
<div class="a" style="left:1488.3px;top:329.7px;width:60.4px;height:24.8px;background:#f1f2f5;border:1px solid #e6e8ec;border-radius:4px"></div>
<div class="t" style="left:1495.3px;top:335px;font-size:15.2px;color:#909399;">图片</div>
<svg style="left:1531px;top:335px;" width="14" height="14" viewBox="0 0 14 14" fill="none"><circle cx="7" cy="7" r="7" fill="#c0c4cc"/><path d="M4.4 4.4 L9.6 9.6 M9.6 4.4 L4.4 9.6" stroke="#8b8f97" stroke-width="1"/></svg>
<svg style="left:1853.5px;top:339px;" width="14" height="8" viewBox="0 0 14 8" fill="none"><path d="M0.5 0.8 L6.7 6.8 L13 0.8" stroke="#b4b8bf" stroke-width="1.1"/></svg>
<div class="a" style="left:1467.2px;top:284px;width:420px;height:92.6px;border:4px solid #fa1d10;border-radius:5px"></div>
<div class="t" style="left:1481px;top:388px;font-size:17.5px;color:#5f6266;font-weight:bold;">文件大小</div>
<div class="inp" style="left:1481px;top:412px;width:400px;height:40px"></div>
<div class="a" style="left:1797px;top:413px;width:83px;height:38px;background:#f5f7fa;border-left:1px solid #dcdfe6;border-radius:0 3px 3px 0"></div>
<div class="t" style="left:1494.5px;top:426px;font-size:15.4px;color:#5f6266;font-family:'Noto Sans CJK SC',sans-serif;">10</div>
<div class="t" style="left:1811.5px;top:426px;font-size:15.4px;color:#a8abb2;font-family:'Noto Sans CJK SC',sans-serif;">MB</div>
<svg style="left:1853px;top:430px;" width="14" height="8" viewBox="0 0 14 8" fill="none"><path d="M0.5 0.8 L6.7 6.8 L13 0.8" stroke="#b4b8bf" stroke-width="1.1"/></svg>
<div class="t" style="left:1481px;top:478px;font-size:17.5px;color:#5f6266;font-weight:bold;">上传地址</div>
<div class="inp" style="left:1481px;top:502px;width:400px;height:40px"></div>
<div class="a" style="left:1493.5px;top:510px;width:350px;height:28px;overflow:hidden"><div class="t" style="left:0px;top:5px;font-size:15.2px;color:#5f6266;font-family:'Noto Sans CJK SC',sans-serif;">/api/lowcode/models/attachments/actions/upload</div></div>
<div class="t" style="left:1481px;top:568px;font-size:17.5px;color:#5f6266;font-weight:bold;">展示模式</div>
<div class="a" style="left:1481px;top:595px;width:60px;height:35px;background:#f5f6f8;border-radius:3px"></div>
<div class="t" style="left:1411px;width:200px;text-align:center;top:605px;font-size:15.5px;color:#606266;">列表</div>
<div class="a" style="left:1554px;top:595px;width:61px;height:35px;background:#fff;border:1.2px solid #409eff;border-radius:2px"></div>
<div class="t" style="left:1484px;width:200px;text-align:center;top:605px;font-size:15.5px;color:#606266;">图片</div>
<svg style="left:1593px;top:595px;" width="22" height="22" viewBox="0 0 22 22" fill="none"><path d="M0 0 H22 V22 Z" fill="#409eff"/><path d="M10.5 6.8 L13.5 9.6 L18.6 3.6" stroke="#b9dbff" stroke-width="1.1"/></svg>
<div class="a" style="left:1627px;top:595px;width:91px;height:35px;background:#f5f6f8;border-radius:3px"></div>
<div class="t" style="left:1572.5px;width:200px;text-align:center;top:605px;font-size:15.5px;color:#606266;">表格信息</div>
<div class="a" style="left:1471.3px;top:553px;width:257.5px;height:92.7px;border:4px solid #fa1d10;border-radius:5px"></div>
<div class="t" style="left:1481px;top:656px;font-size:17.5px;color:#5f6266;font-weight:bold;">允许预览</div>
<div class="a" style="left:1481.3px;top:688px;width:50px;height:25px;background:#409eff;border-radius:12.5px"></div>
<div class="a" style="left:1508px;top:690.3px;width:20.4px;height:20.4px;background:#fff;border-radius:50%"></div>
<div class="a" style="left:1468px;top:747px;width:425px;height:39px;background:#f5f5f5;border-bottom:1px solid #e8ebf2"></div>
<div class="t" style="left:1493px;top:760px;font-size:16.3px;color:#303133;">验证</div>
<svg style="left:1871px;top:759.3px;" width="8" height="14" viewBox="0 0 8 14" fill="none"><path d="M1 0.8 L7 7 L1 13.2" stroke="#555" stroke-width="1.1"/></svg>
<div class="a" style="left:1468px;top:786px;width:425px;height:37px;background:#f5f5f5"></div>
<div class="t" style="left:1493px;top:797px;font-size:16.3px;color:#303133;">高级</div>
<svg style="left:1871px;top:797.8px;" width="8" height="14" viewBox="0 0 8 14" fill="none"><path d="M1 0.8 L7 7 L1 13.2" stroke="#555" stroke-width="1.1"/></svg>
</body>
</html>
